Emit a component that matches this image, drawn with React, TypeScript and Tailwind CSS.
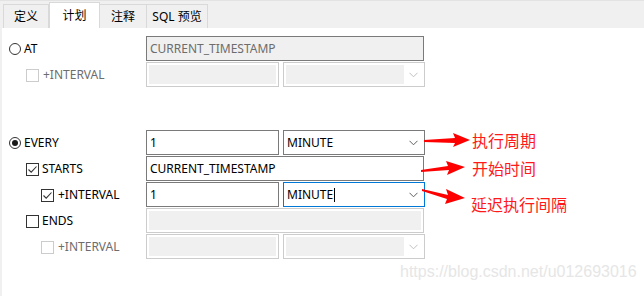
import React from "react";

const font = { fontFamily: '"Noto Sans", "Noto Sans CJK SC", sans-serif' };

function Radio({ checked }: { checked?: boolean }) {
  return (
    <span className="w-[12px] h-[12px] rounded-full border border-[#333333] bg-white flex items-center justify-center shrink-0">
      {checked && <span className="w-[6px] h-[6px] rounded-full bg-[#1a1a1a]" />}
    </span>
  );
}

function Check({ checked, disabled }: { checked?: boolean; disabled?: boolean }) {
  return (
    <span
      className={
        "w-[13px] h-[13px] border bg-white flex items-center justify-center shrink-0 " +
        (disabled ? "border-[#cccccc]" : "border-[#333333]")
      }
    >
      {checked && (
        <svg width="11" height="11" viewBox="0 0 11 11">
          <path d="M1.5 5.5 L4.2 8.2 L9.5 2.5" fill="none" stroke="#333" strokeWidth="1.1" />
        </svg>
      )}
    </span>
  );
}

function Chevron({ color = "#606060" }: { color?: string }) {
  return (
    <svg width="9" height="6" viewBox="0 0 9 6" className="shrink-0">
      <path d="M0.5 0.8 L4.5 4.8 L8.5 0.8" fill="none" stroke={color} strokeWidth="1" />
    </svg>
  );
}

function Input({ value, w, disabled, darkBorder }: { value?: string; w: string; disabled?: boolean; darkBorder?: boolean }) {
  return (
    <div
      className={
        "h-[25px] border flex items-center px-[2px] text-[12px] " +
        w +
        " " +
        (disabled
          ? (darkBorder ? "border-[#7a7a7a] bg-[#f0f0f0] text-[#6d6d6d]" : "border-[#cccccc] bg-white p-[2px]")
          : "border-[#7a7a7a] bg-white text-black")
      }
    >
      {disabled && !darkBorder ? (
        <div className="w-full h-full bg-[#f0f0f0]" />
      ) : (
        <span className="pl-[1px]">{value}</span>
      )}
    </div>
  );
}

function Select({ value, disabled, focused }: { value?: string; disabled?: boolean; focused?: boolean }) {
  return (
    <div
      className={
        "h-[25px] w-[142px] border flex items-center text-[12px] " +
        (disabled ? "border-[#cccccc] bg-white p-[2px]" : focused ? "border-[#0078d7] bg-white pl-[3px]" : "border-[#7a7a7a] bg-white pl-[3px]")
      }
    >
      {disabled ? (
        <>
          <div className="w-[118px] h-full bg-[#f0f0f0]" />
          <div className="flex-1 flex justify-center">
            <Chevron color="#c0c0c0" />
          </div>
        </>
      ) : (
        <>
          <span className="flex-1 text-black flex items-center">
            {value}
            {focused && <span className="inline-block w-[1px] h-[14px] bg-black ml-[1px]" />}
          </span>
          <span className="w-[20px] flex justify-center mr-[1px]">
            <Chevron />
          </span>
        </>
      )}
    </div>
  );
}

function Row({ children, label }: { children: React.ReactNode; label: React.ReactNode }) {
  return (
    <div className="flex h-[26px]">
      <div className="w-[146px] flex items-center">{label}</div>
      <div className="flex gap-[4px] items-start">{children}</div>
    </div>
  );
}

export default function App() {
  return (
    <div className="w-[644px] h-[296px] bg-white relative overflow-hidden" style={font}>
      {/* tab bar */}
      <div className="h-[28px] bg-[#f0f0f0] flex items-end pl-[3px] border-t border-[#e3e3e3]">
        <div className="h-[24px] w-[46px] border border-[#d9d9d9] border-b-0 flex items-center justify-center text-[12px] text-black bg-[#f0f0f0]">定义</div>
        <div className="h-[26px] w-[51px] border border-[#d9d9d9] border-b-0 flex items-center justify-center text-[12px] text-black bg-white">计划</div>
        <div className="h-[24px] w-[47px] border border-[#d9d9d9] border-b-0 border-l-0 flex items-center justify-center text-[12px] text-black bg-[#f0f0f0]">注释</div>
        <div className="h-[24px] w-[61px] border border-[#d9d9d9] border-b-0 border-l-0 flex items-center justify-center text-[12px] text-black bg-[#f0f0f0]">SQL 预览</div>
      </div>

      <div className="flex h-[268px]">
        <div className="w-[2px] bg-[#f0f0f0]" />
        <div className="flex-1 pt-[8px] text-[12px]">
          <div className="ml-[-2px]">
            <Row
              label={
                <div className="flex items-center pl-[9px] gap-[3px]">
                  <Radio />
                  <span className="text-black">AT</span>
                </div>
              }
            >
              <Input value="CURRENT_TIMESTAMP" w="w-[278px]" disabled darkBorder />
            </Row>
            <Row
              label={
                <div className="flex items-center pl-[26px] gap-[4px]">
                  <Check disabled />
                  <span className="text-[#6d6d6d]">+INTERVAL</span>
                </div>
              }
            >
              <Input w="w-[133px]" disabled />
              <Select disabled />
            </Row>

            <div className="h-[42px]" />

            <Row
              label={
                <div className="flex items-center pl-[9px] gap-[3px]">
                  <Radio checked />
                  <span className="text-black">EVERY</span>
                </div>
              }
            >
              <Input value="1" w="w-[133px]" />
              <Select value="MINUTE" />
            </Row>
            <Row
              label={
                <div className="flex items-center pl-[26px] gap-[3px]">
                  <Check checked />
                  <span className="text-black">STARTS</span>
                </div>
              }
            >
              <Input value="CURRENT_TIMESTAMP" w="w-[278px]" />
            </Row>
            <Row
              label={
                <div className="flex items-center pl-[41px] gap-[4px]">
                  <Check checked />
                  <span className="text-black">+INTERVAL</span>
                </div>
              }
            >
              <Input value="1" w="w-[133px]" />
              <Select value="MINUTE" focused />
            </Row>
            <Row
              label={
                <div className="flex items-center pl-[26px] gap-[3px]">
                  <Check />
                  <span className="text-black">ENDS</span>
                </div>
              }
            >
              <Input w="w-[278px]" disabled />
            </Row>
            <Row
              label={
                <div className="flex items-center pl-[41px] gap-[4px]">
                  <Check disabled />
                  <span className="text-[#6d6d6d]">+INTERVAL</span>
                </div>
              }
            >
              <Input w="w-[133px]" disabled />
              <Select disabled />
            </Row>
          </div>
        </div>
      </div>

      {/* annotations overlay */}
      <svg className="absolute left-0 top-0" width="644" height="296" viewBox="0 0 644 296">
        <polygon points="424,140 455,138 453,133 470,140 453,147 455,143 424,142" fill="#ff0000" />
        <polygon points="421,170 448,166 446,161 465,167 447,175 449,170 421,172" fill="#ff0000" />
        <polygon points="422,189 448,195 446,189 465,198 445,204 447,199 422,191" fill="#ff0000" />
      </svg>
      <div className="absolute left-[472px] top-[130px] text-[16px] text-[#ff1a1a] leading-[20px]" style={{ fontFamily: '"Noto Sans CJK SC", sans-serif' }}>执行周期</div>
      <div className="absolute left-[472px] top-[158px] text-[16px] text-[#ff1a1a] leading-[20px]" style={{ fontFamily: '"Noto Sans CJK SC", sans-serif' }}>开始时间</div>
      <div className="absolute left-[471px] top-[194px] text-[16px] text-[#ff1a1a] leading-[20px]" style={{ fontFamily: '"Noto Sans CJK SC", sans-serif' }}>延迟执行间隔</div>
      <div className="absolute left-[400px] top-[262px] text-[16px] text-[#e6e6e6] leading-[20px]" style={{ fontFamily: '"Liberation Sans", sans-serif' }}>https://blog.csdn.net/u012693016</div>
    </div>
  );
}
